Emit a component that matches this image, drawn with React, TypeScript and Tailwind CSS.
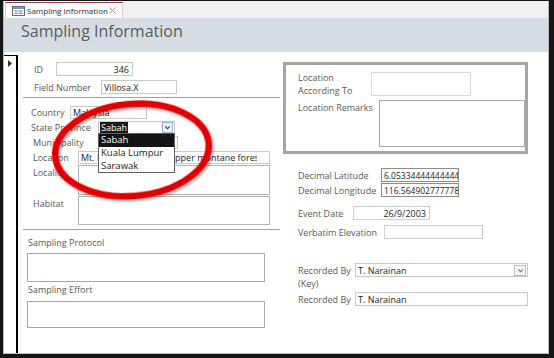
import React from "react";

function Box({
  className,
  children,
}: {
  className: string;
  children?: React.ReactNode;
}) {
  return (
    <div
      className={
        "flex-none bg-white border flex items-center overflow-hidden whitespace-nowrap text-[#1e1e1e] " +
        className
      }
    >
      {children}
    </div>
  );
}

function Chevron({ className }: { className: string }) {
  return (
    <svg viewBox="0 0 10 10" className={className}>
      <path d="M2.5 3.8 L5 6.3 L7.5 3.8" fill="none" stroke="currentColor" strokeWidth="1.2" />
    </svg>
  );
}

export default function App() {
  return (
    <div className="relative w-[554px] h-[358px] bg-[#151515] pt-px pl-[3px] pr-[5px] pb-[4px] font-['Open_Sans',sans-serif]">
      <div className="w-full h-full flex flex-col bg-white border-x border-b border-[#bdbdbd]">
        {/* tab bar */}
        <div className="h-[17px] flex-none bg-[#f1f1f1] flex items-end">
          <div className="ml-[1px] h-[16px] w-[118px] bg-[#fafafa] border-t border-t-[#9a3c4c] border-x border-x-[#d3d3d3] flex items-center pl-[6px] whitespace-nowrap">
            <svg viewBox="0 0 13 10" className="w-[13px] h-[10px] flex-none">
              <rect x="0.5" y="0.5" width="12" height="9" fill="#ffffff" stroke="#5b6f8f" />
              <rect x="1" y="1" width="11" height="2" fill="#7f93b5" />
              <rect x="2.5" y="4.5" width="3" height="1" fill="#5b6f8f" />
              <rect x="6.5" y="4.5" width="4" height="1" fill="#5b6f8f" />
              <rect x="2.5" y="6.8" width="3" height="1" fill="#5b6f8f" />
              <rect x="6.5" y="6.8" width="4" height="1" fill="#5b6f8f" />
            </svg>
            <span className="ml-[2px] w-[80px] flex-none text-[8px] leading-none text-[#333]">Sampling Information</span>
            <svg viewBox="0 0 8 8" className="ml-[2px] w-[7px] h-[7px] flex-none">
              <path d="M0.5 0.5 L7.5 7.5 M7.5 0.5 L0.5 7.5" stroke="#8a8a8a" strokeWidth="0.9" />
            </svg>
          </div>
        </div>
        {/* header */}
        <div className="h-[34px] flex-none bg-[#d6dce4] flex items-start pt-[5px] pl-[17px]">
          <span className="text-[16px] leading-none text-[#5c5c5c]">Sampling Information</span>
        </div>
        {/* body */}
        <div className="flex-1 flex">
          {/* record selector */}
          <div className="flex-none w-[14px] mt-[3px] border-t border-r-2 border-black flex justify-center">
            <svg viewBox="0 0 4 7" className="mt-[4px] w-[4px] h-[7px]">
              <path d="M0 0 L4 3.5 L0 7 Z" fill="#333" />
            </svg>
          </div>

          {/* left column */}
          <div className="flex-none w-[262px] flex flex-col text-[9px] leading-[11px] text-[#595959]">
            <div className="mt-[10px] flex items-center pl-[16px]">
              <span className="w-[22px] flex-none">ID</span>
              <Box className="w-[77px] h-[14px] border-[#c9c9c9] justify-end pr-[3px]">346</Box>
            </div>
            <div className="mt-[4px] flex items-center pl-[16px]">
              <span className="w-[67px] flex-none">Field Number</span>
              <Box className="w-[76px] h-[14px] border-[#c9c9c9] pl-[2px]">Villosa.X</Box>
            </div>
            <div className="mt-[3px] ml-[5px] w-[257px] h-px bg-[#a3a3a3]" />
            <div className="mt-[8px] flex items-center pl-[13px]">
              <span className="w-[39px] flex-none">Country</span>
              <Box className="w-[77px] h-[13px] border-[#c9c9c9] pl-[2px]">Malaysia</Box>
            </div>
            <div className="mt-[2px] flex items-center pl-[13px]">
              <span className="w-[67px] flex-none">State Province</span>
              <div className="relative flex-none w-[77px] h-[13px] border border-[#c9c9c9] bg-white flex items-center">
                <span className="ml-px h-full bg-[#1b1b1b] text-white px-px flex items-center">Sabah</span>
                <div className="ml-auto mr-px w-[11px] h-[11px] border border-[#9bb3d0] bg-[#eaf1f9] flex items-center justify-center text-[#1d3f73]">
                  <Chevron className="w-[9px] h-[9px]" />
                </div>
                <div className="absolute z-10 left-[-1px] top-full w-[77px] h-[40px] border border-[#5e5e5e] bg-white text-[#1a1a1a] text-[9.5px] leading-[12.5px] flex flex-col">
                  <div className="h-[13px] bg-[#141414] text-white pl-[2px]">Sabah</div>
                  <div className="h-[12.5px] pl-[2px]">Kuala Lumpur</div>
                  <div className="h-[12.5px] pl-[2px]">Sarawak</div>
                </div>
              </div>
            </div>
            <div className="mt-[2px] flex items-center pl-[15px]">
              <span className="w-[65px] flex-none">Municipality</span>
              <Box className="w-[80px] h-[13px] border-[#c9c9c9] pl-[2px]"> </Box>
            </div>
            <div className="mt-[2px] flex items-center pl-[15px]">
              <span className="w-[45px] flex-none">Location</span>
              <Box className="w-[192px] h-[13px] border-[#c9c9c9] pl-[2px] pr-[12px]">
                <span className="overflow-hidden">Mt. Kinabalu Park, in upper montane forest</span>
              </Box>
            </div>
            <div className="mt-[1px] flex items-start pl-[15px]">
              <span className="w-[45px] flex-none pt-[2px]">Locality</span>
              <Box className="w-[192px] h-[30px] border-[#b3b3b3]"> </Box>
            </div>
            <div className="mt-[1px] flex items-start pl-[15px]">
              <span className="w-[45px] flex-none pt-[2px]">Habitat</span>
              <Box className="w-[192px] h-[29px] border-[#b3b3b3]"> </Box>
            </div>
            <div className="mt-[4px] ml-[5px] w-[257px] h-px bg-[#a3a3a3]" />
            <div className="mt-[8px] pl-[10px] leading-[10px]">Sampling Protocol</div>
            <Box className="mt-[5px] ml-[9px] w-[238px] h-[29px] border-[#a9a9a9]"> </Box>
            <div className="mt-[3px] pl-[10px] leading-[10px]">Sampling Effort</div>
            <Box className="mt-[6px] ml-[9px] w-[238px] h-[27px] border-[#a9a9a9]"> </Box>
          </div>

          {/* right column */}
          <div className="flex-1 flex flex-col text-[9px] leading-[11px] text-[#595959]">
            <div className="mt-[10px] ml-[3px] w-[245px] h-[92px] border-[3px] border-[#a6a6a6] flex flex-col overflow-hidden">
              <div className="mt-[6px] flex items-start pl-[12px]">
                <span className="w-[73px] flex-none leading-[13px]">
                  Location
                  <br />
                  According To
                </span>
                <Box className="mt-px w-[100px] h-[24px] border-[#d9d9d9]"> </Box>
              </div>
              <div className="mt-[3px] flex items-start pl-[12px]">
                <span className="w-[81px] flex-none pt-[2px]">Location Remarks</span>
                <Box className="w-[146px] h-[47px] border-[#a9a9a9]"> </Box>
              </div>
            </div>
            <div className="mt-[14px] flex items-center pl-[18px]">
              <span className="w-[83px] flex-none">Decimal Latitude</span>
              <Box className="w-[78px] h-[14px] border-[#8c8c8c] pl-[2px] text-[8.5px]">6.05334444444444</Box>
            </div>
            <div className="mt-px flex items-center pl-[18px]">
              <span className="w-[83px] flex-none">Decimal Longitude</span>
              <Box className="w-[78px] h-[14px] border-[#8c8c8c] pl-[2px] text-[8.5px]">116.564902777778</Box>
            </div>
            <div className="mt-[9px] flex items-center pl-[18px]">
              <span className="w-[55px] flex-none">Event Date</span>
              <Box className="w-[77px] h-[14px] border-[#cfcfcf] justify-end pr-[3px]">26/9/2003</Box>
            </div>
            <div className="mt-[5px] flex items-center pl-[18px]">
              <span className="w-[86px] flex-none">Verbatim Elevation</span>
              <Box className="w-[99px] h-[14px] border-[#cfcfcf]"> </Box>
            </div>
            <div className="mt-[24px] h-[29px] flex items-start pl-[18px]">
              <span className="w-[57px] flex-none leading-[13px] pt-px">
                Recorded By
                <br />
                (Key)
              </span>
              <div className="flex-none w-[173px] h-[14px] border border-[#c9c9c9] bg-white flex items-center text-[#1e1e1e] pl-[2px]">
                T. Narainan
                <div className="ml-auto mr-px w-[12px] h-[11px] border border-[#bdbdbd] bg-[#f4f4f4] flex items-center justify-center text-[#777]">
                  <Chevron className="w-[9px] h-[9px]" />
                </div>
              </div>
            </div>
            <div className="flex items-center pl-[18px]">
              <span className="w-[57px] flex-none">Recorded By</span>
              <Box className="w-[173px] h-[14px] border-[#c9c9c9] pl-[2px]">T. Narainan</Box>
            </div>
          </div>
        </div>
      </div>

      {/* red annotation ellipse */}
      <svg className="absolute left-0 top-0 w-[554px] h-[358px] pointer-events-none" viewBox="0 0 554 358">
        <defs>
          <filter id="sh" x="-20%" y="-20%" width="140%" height="140%">
            <feDropShadow dx="1.5" dy="2" stdDeviation="1.5" floodColor="#000" floodOpacity="0.35" />
          </filter>
        </defs>
        <ellipse
          cx="132"
          cy="150"
          rx="77"
          ry="46"
          transform="rotate(-5 132 150)"
          fill="none"
          stroke="#e10000"
          strokeWidth="6.5"
          filter="url(#sh)"
        />
      </svg>
    </div>
  );
}
